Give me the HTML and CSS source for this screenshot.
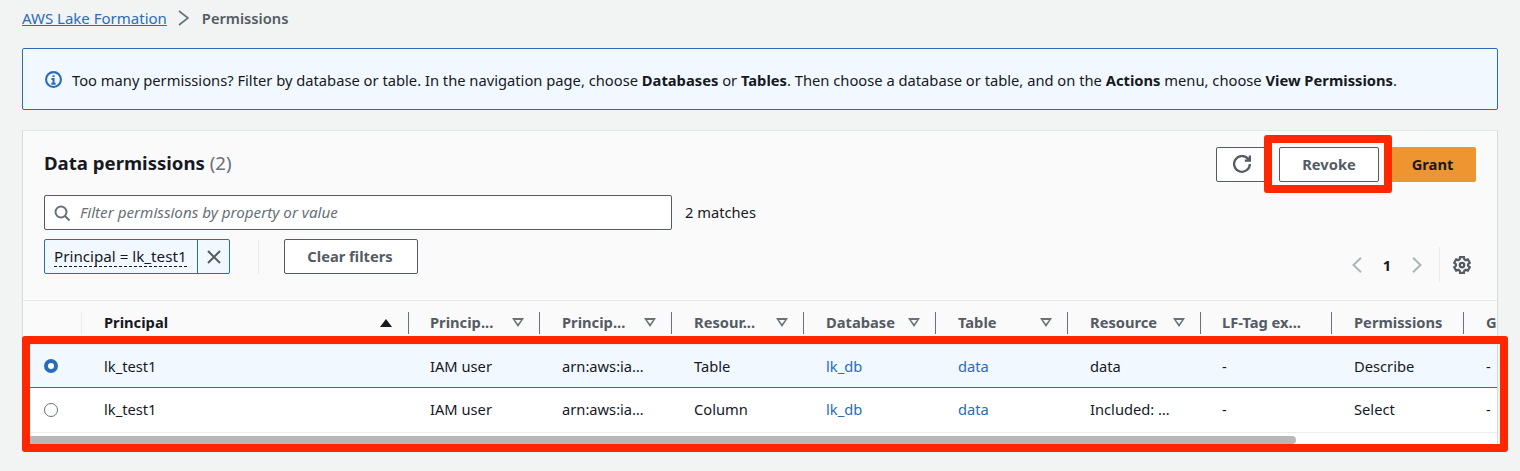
FILE: index.html
```html
<!DOCTYPE html>
<html lang="en">
<head>
    <meta charset="UTF-8">
    <meta name="viewport" content="width=device-width, initial-scale=1.0">
    <title>Data permissions</title>
    <link rel="stylesheet" href="styles.css">
</head>
<body>
    <nav class="breadcrumb">
        <a href="#">AWS Lake Formation</a>
        <svg class="crumbSep" viewBox="0 0 12 16"><path d="M1 1l9 7-9 7"/></svg>
        <span>Permissions</span>
    </nav>

    <div class="flash">
        <svg class="flashIcon" viewBox="0 0 16 16"><circle cx="8" cy="8" r="7"/><path d="M6 7.500h2V12M6 12h4M8 4v1.600"/></svg>
        <p>Too many permissions? Filter by database or table. In the navigation page, choose <b>Databases</b> or <b>Tables</b>. Then choose a database or table, and on the <b>Actions</b> menu, choose <b>View Permissions</b>.</p>
    </div>

    <section class="card">
        <div class="cardHeader">
            <div class="headerTop">
                <h2>Data permissions <span class="count">(2)</span></h2>
                <div class="actions">
                    <button class="btn refreshBtn"><svg viewBox="0 0 16 16"><path d="M15 8a7 7 0 1 1-2-5l2 2M15 .5V5h-4.500"/></svg></button>
                    <button class="btn revokeBtn">Revoke</button>
                    <button class="btn grantBtn">Grant</button>
                </div>
            </div>
            <div class="filterRow">
                <div class="filterInput">
                    <svg viewBox="0 0 16 16"><circle cx="7" cy="7" r="5.500"/><path d="M11 11l4.500 4.500"/></svg>
                    <span class="filterHint">Filter permissions by property or value</span>
                </div>
                <span class="matches">2 matches</span>
            </div>
            <div class="tokenRow">
                <div class="chip">
                    <span class="chipText"><span class="chipLabel">Principal = lk_test1</span></span>
                    <span class="chipClose"><svg viewBox="0 0 16 16"><path d="M2 2l12 12M14 2L2 14"/></svg></span>
                </div>
                <span class="tokenDivider"></span>
                <button class="btn clearBtn">Clear filters</button>
                <div class="pager">
                    <svg class="pageArrow" viewBox="0 0 16 16"><path d="M12 .8L4.500 8l7.500 7.200"/></svg>
                    <span class="pageNum">1</span>
                    <svg class="pageArrow" viewBox="0 0 16 16"><path d="M4 .8L11.500 8 4 15.200"/></svg>
                    <span class="pagerDivider"></span>
                    <svg class="gear" viewBox="0 0 16 16"><path d="M6.300 1h3.400l.4 2 1.200.7 1.900-.7 1.700 3-1.500 1.300v1.400l1.500 1.300-1.700 3-1.900-.7-1.200.7-.4 2H6.300l-.4-2-1.200-.7-1.900.7-1.700-3 1.500-1.300V7.300L1.100 6l1.700-3 1.900.7L5.900 3z"/><circle cx="8" cy="8" r="2"/></svg>
                </div>
            </div>
        </div>

        <div class="tableWrap">
            <table class="dataTable">
                <colgroup>
                    <col class="colSelect">
                    <col class="colPrincipal">
                    <col class="colA"><col class="colB"><col class="colB"><col class="colB"><col class="colB">
                    <col class="colC"><col class="colA"><col class="colB"><col class="colB">
                </colgroup>
                <thead>
                    <tr>
                        <th class="thSelect"></th>
                        <th class="thFirst"><div class="thInner"><span class="thDark">Principal</span><i class="sorted"></i></div></th>
                        <th class="tight"><div class="thInner"><span>Princip...</span><i class="sortable"></i></div></th>
                        <th><div class="thInner"><span>Princip...</span><i class="sortable"></i></div></th>
                        <th><div class="thInner"><span>Resour...</span><i class="sortable"></i></div></th>
                        <th><div class="thInner"><span>Database</span><i class="sortable"></i></div></th>
                        <th><div class="thInner"><span>Table</span><i class="sortable"></i></div></th>
                        <th><div class="thInner"><span>Resource</span><i class="sortable"></i></div></th>
                        <th class="tight"><div class="thInner"><span>LF-Tag ex...</span></div></th>
                        <th><div class="thInner"><span>Permissions</span></div></th>
                        <th><div class="thInner"><span>G</span></div></th>
                    </tr>
                </thead>
                <tbody>
                    <tr class="selected">
                        <td><span class="radio radioOn"></span></td>
                        <td>lk_test1</td>
                        <td class="tight">IAM user</td>
                        <td>arn:aws:ia…</td>
                        <td>Table</td>
                        <td><a href="#">lk_db</a></td>
                        <td><a href="#">data</a></td>
                        <td>data</td>
                        <td class="tight">-</td>
                        <td>Describe</td>
                        <td>-</td>
                    </tr>
                    <tr>
                        <td><span class="radio"></span></td>
                        <td>lk_test1</td>
                        <td class="tight">IAM user</td>
                        <td>arn:aws:ia…</td>
                        <td>Column</td>
                        <td><a href="#">lk_db</a></td>
                        <td><a href="#">data</a></td>
                        <td>Included: …</td>
                        <td class="tight">-</td>
                        <td>Select</td>
                        <td>-</td>
                    </tr>
                </tbody>
            </table>
        </div>
        <div class="scrollTrack"><div class="scrollThumb"></div></div>
    </section>

    <div class="markRevoke"></div>
    <div class="markRows"></div>
</body>
</html>
```

FILE: styles.css
```css
* {
    box-sizing: border-box;
}
body {
    position: relative;
    margin: 0;
    height: 471px;
    padding: 0 22px;
    overflow: hidden;
    font-family: "Noto Sans", "Open Sans", sans-serif;
    font-size: 14.700px;
    line-height: 20px;
    color: #16191f;
    background-color: #f2f3f3;
}
svg {
    fill: none;
    stroke: currentColor;
    stroke-width: 2;
    display: block;
}
a {
    color: #2b6cb8;
    text-decoration: none;
}
.breadcrumb {
    display: flex;
    align-items: center;
    height: 35px;
    color: #545b64;
    font-weight: 600;
}
.breadcrumb a {
    font-size: 15px;
    font-weight: 400;
    text-decoration: underline;
}
.crumbSep {
    width: 12px;
    height: 16px;
    margin: 0 12px 0 11px;
    color: #687078;
    stroke-width: 1.600;
}
.flash {
    display: flex;
    align-items: center;
    height: 62px;
    margin-top: 13px;
    padding: 2px 0 0 22px;
    background-color: #f1f8ff;
    border: 1px solid #2b6cb8;
    border-radius: 2px;
}
.flash p {
    margin: 0;
    font-size: 14.720px;
}
.flash b {
    font-weight: 700;
}
.flashIcon {
    width: 17px;
    height: 17px;
    margin: -2px 10px 0 0;
    color: #2b6cb8;
}
.card {
    margin-top: 20px;
    height: 322px;
    background-color: #fff;
    border-left: 1px solid #d5dbdb;
    border-right: 1px solid #d5dbdb;
    border-top: 1px solid #e4e7e7;
    overflow: hidden;
}
.cardHeader {
    height: 170px;
    padding: 16px 21px 0 21px;
    background-color: #fafafa;
    border-bottom: 1px solid #e9ebed;
}
.headerTop {
    display: flex;
    justify-content: space-between;
    height: 48px;
}
h2 {
    margin: 4px 0 0 0;
    font-size: 18.600px;
    line-height: 24px;
    font-weight: 700;
}
.count {
    font-weight: 400;
    color: #687078;
}
.actions {
    display: flex;
    gap: 12px;
}
.btn {
    height: 35px;
    font-family: inherit;
    font-size: 14.700px;
    font-weight: 700;
    color: #545b64;
    background-color: #fff;
    border: 1px solid #545b64;
    border-radius: 2px;
    padding: 0 0 1px 0;
}
.refreshBtn {
    width: 51px;
    display: flex;
    align-items: center;
    justify-content: center;
}
.refreshBtn svg {
    width: 18px;
    height: 18px;
    margin-left: 1px;
}
.revokeBtn {
    width: 100px;
}
.grantBtn {
    width: 85px;
    padding-right: 2px;
    color: #16191f;
    background-color: #ee9430;
    border-color: #ee9430;
}
.filterRow {
    display: flex;
    align-items: center;
    gap: 13px;
    height: 35px;
}
.filterInput {
    display: flex;
    align-items: center;
    width: 628px;
    height: 35px;
    padding-left: 9px;
    background-color: #fff;
    border: 1px solid #545b64;
    border-radius: 2px;
    font-size: 15.200px;
    font-style: italic;
    color: #687078;
}
.filterInput svg {
    width: 16px;
    height: 16px;
    margin-right: 10px;
    color: #687078;
}
.filterHint,
.matches {
    margin-top: -2px;
}
.tokenRow {
    display: flex;
    align-items: flex-start;
    margin-top: 9px;
}
.chip {
    display: flex;
    width: 186px;
    height: 35px;
    background-color: #f1f8ff;
    border: 1px solid #2b6cb8;
    border-radius: 2px;
}
.chipText {
    width: 152px;
    padding: 6px 0 0 9px;
    font-size: 15.200px;
    white-space: nowrap;
}
.chipLabel {
    border-bottom: 1px dashed #16191f;
}
.chipClose {
    flex: 1;
    display: flex;
    align-items: center;
    justify-content: center;
    color: #545b64;
    border-left: 1px solid #2b6cb8;
}
.chipClose svg {
    width: 16px;
    height: 16px;
}
.tokenDivider {
    width: 1px;
    height: 35px;
    margin: 0 25px 0 28px;
    background-color: #e9ebed;
}
.clearBtn {
    width: 134px;
    padding: 0 2px 2px 0;
}
.pager {
    display: flex;
    align-items: center;
    height: 35px;
    margin: 8px 5px 0 auto;
}
.pageArrow {
    width: 16px;
    height: 16px;
    color: #aab7b8;
}
.pageNum {
    width: 44px;
    text-align: center;
    font-weight: 700;
}
.pagerDivider {
    width: 1px;
    height: 35px;
    margin: 0 13px 0 14px;
    background-color: #e9ebed;
}
.gear {
    width: 18px;
    height: 18px;
    color: #545b64;
}
.tableWrap {
    overflow: hidden;
}
.dataTable {
    width: 1573px;
    table-layout: fixed;
    border-collapse: separate;
    border-spacing: 0;
}
.colSelect { width: 58px; }
.colPrincipal { width: 328px; }
.colA { width: 131px; }
.colB { width: 132px; }
.colC { width: 133px; }
th {
    height: 44px;
    padding: 0;
    font-weight: 700;
    text-align: left;
    color: #545b64;
    background-color: #fafafa;
    border-bottom: 1px solid #eaeded;
}
th:last-child .thInner {
    border-right: none;
}
.thInner {
    display: flex;
    align-items: center;
    justify-content: space-between;
    height: 22px;
    padding: 0 15px 0 22px;
    border-right: 1px solid #687078;
    white-space: nowrap;
}
.thInner span {
    margin-top: -2px;
}
.thFirst .thInner {
    padding-right: 16px;
    border-left: 1px solid #e9ebed;
}
th.tight .thInner {
    padding-left: 21px;
}
.thDark {
    color: #16191f;
}
.sorted {
    width: 0;
    height: 0;
    border-left: 6px solid transparent;
    border-right: 6px solid transparent;
    border-bottom: 8px solid #16191f;
}
.sortable {
    position: relative;
    width: 0;
    height: 0;
    border-left: 6px solid transparent;
    border-right: 6px solid transparent;
    border-top: 9px solid #687078;
}
.sortable::after {
    content: "";
    position: absolute;
    left: -3px;
    top: -7px;
    border-left: 3px solid transparent;
    border-right: 3px solid transparent;
    border-top: 4px solid #fafafa;
}
td {
    height: 45px;
    padding: 0 0 0 22px;
    white-space: nowrap;
    background-color: #fff;
    border-bottom: 1px solid #eaeded;
}
td + td {
    padding-bottom: 2px;
}
td:first-child {
    padding: 0 0 0 21px;
}
td:nth-child(2) {
    padding-left: 23px;
}
td.tight {
    padding-left: 21px;
}
.selected td {
    height: 43px;
    padding-bottom: 0;
    background-color: #f1f8ff;
    border-bottom: 1px solid #2b6cb8;
}
.radio {
    display: block;
    width: 14px;
    height: 14px;
    background-color: #fff;
    border: 1px solid #687078;
    border-radius: 50%;
}
.radioOn {
    border: 4px solid #2b6cb8;
}
.scrollTrack {
    height: 16px;
    padding: 3px 0 0 7px;
    background-color: #fff;
}
.scrollThumb {
    width: 1266px;
    height: 8px;
    background-color: #b8b8b8;
    border-radius: 0 4px 4px 0;
}
.markRevoke {
    position: absolute;
    left: 1264px;
    top: 135px;
    width: 128px;
    height: 58px;
    border: 8px solid #ff2600;
    border-radius: 3px;
}
.markRows {
    position: absolute;
    left: 22px;
    top: 336px;
    width: 1486px;
    height: 116px;
    border: 8px solid #ff2600;
    border-radius: 3px;
}
```
